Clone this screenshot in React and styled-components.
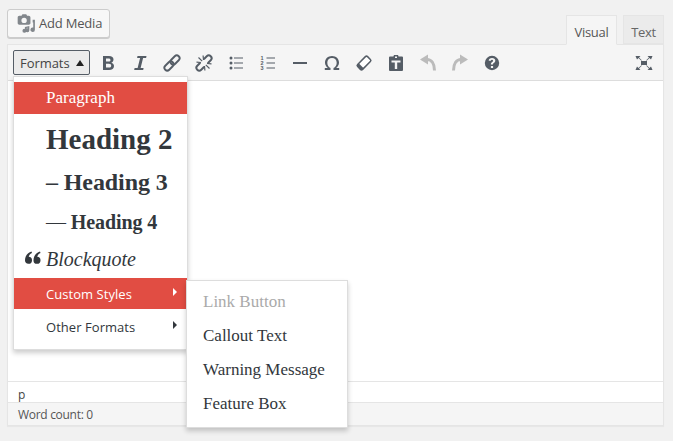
import React from 'react';
import styled, { createGlobalStyle } from 'styled-components';

const GlobalStyle = createGlobalStyle`
  html, body {
    margin: 0;
    padding: 0;
    background: #f1f1f1;
    font-family: "Open Sans", "Liberation Sans", sans-serif;
    color: #444;
  }
  * { box-sizing: border-box; }
`;

const Icons = {
  bold: <path fill="currentColor" d="M4 2h6c2.900 0 4.500 1.400 4.500 3.600 0 1.600-.9 2.700-2.200 3.100 1.700.4 2.700 1.600 2.700 3.400 0 2.500-1.900 3.900-5 3.900H4zm3 2.400v3.200h2.500c1.300 0 2-.6 2-1.600s-.7-1.600-2-1.600zm0 5.400v3.800h2.900c1.500 0 2.300-.7 2.300-1.900s-.8-1.900-2.300-1.900z" />,
  italic: <path fill="currentColor" d="M6.500 2h9l-.4 2h-3L9.600 14h3l-.4 2h-9l.4-2h3L9.100 4h-3z" />,
  link: (
    <g fill="none" stroke="currentColor" strokeWidth="1.900" transform="rotate(-45 9 9)">
      <rect x="-.5" y="6.200" width="10.500" height="5.600" rx="2.800" />
      <rect x="8" y="6.200" width="10.500" height="5.600" rx="2.800" />
    </g>
  ),
  unlink: (
    <g fill="none" stroke="currentColor">
      <g strokeWidth="2" transform="rotate(-45 9 9)">
        <path d="M6.500 6.200H2.300a2.800 2.800 0 0 0 0 5.600h4.200" />
        <path d="M11.500 6.200h4.200a2.800 2.800 0 0 1 0 5.600h-4.200" />
      </g>
      <path strokeWidth="1.200" d="M7.200 7.200 3.500 3.500M8.500 6l-.4-4.500M6 8.500l-4.500-.4M10.800 10.800l3.700 3.700M9.500 12l.4 4.500M12 9.500l4.500.4" />
    </g>
  ),
  bullist: (
    <g fill="currentColor">
      <circle cx="4" cy="4" r="1.500" /><circle cx="4" cy="9" r="1.500" /><circle cx="4" cy="14" r="1.500" />
      <rect x="7" y="3.500" width="9" height="1" /><rect x="7" y="8.500" width="9" height="1" /><rect x="7" y="13.500" width="9" height="1" />
    </g>
  ),
  numlist: (
    <g fill="currentColor">
      <text x="1.500" y="5.800" fontSize="5.500" fontWeight="700" fontFamily="Liberation Sans">1</text>
      <text x="1.500" y="11" fontSize="5.500" fontWeight="700" fontFamily="Liberation Sans">2</text>
      <text x="1.500" y="16" fontSize="5.500" fontWeight="700" fontFamily="Liberation Sans">3</text>
      <rect x="7.500" y="3.500" width="8.500" height="1" /><rect x="7.500" y="8.500" width="8.500" height="1" /><rect x="7.500" y="13.500" width="8.500" height="1" />
    </g>
  ),
  hr: <rect x="2" y="8" width="14" height="2" fill="currentColor" />,
  omega: <path fill="currentColor" d="M1.800 16v-2h3.100C3.200 12.700 2 10.800 2 8.500 2 4.800 5 2 9 2s7 2.800 7 6.500c0 2.300-1.200 4.200-2.900 5.500h3.100v2h-5.700v-2c1.900-.9 3.200-3 3.200-5.300C13.700 6 11.800 4 9 4S4.300 6 4.300 8.700c0 2.300 1.300 4.400 3.200 5.300v2z" />,
  eraser: (
    <g transform="rotate(-45 9 9)">
      <rect x="2" y="5.500" width="14" height="7" rx="1.500" fill="#fff" stroke="currentColor" strokeWidth="1.500" />
      <path fill="currentColor" d="M2 7a1.500 1.500 0 0 1 1.500-1.500H5v7H3.500A1.500 1.500 0 0 1 2 11z" />
    </g>
  ),
  paste: <path fill="currentColor" fillRule="evenodd" d="M7 1h4l.6 1.500H15a1 1 0 0 1 1 1V16a1 1 0 0 1-1 1H3a1 1 0 0 1-1-1V3.500a1 1 0 0 1 1-1h3.400zM8 2.500V4h2V2.500zM4.500 6.500v2h3.300V15h2.400V8.500h3.300v-2z" />,
  undo: (
    <g fill="currentColor">
      <path d="M1 5.500 9 .5v10z" />
      <path fill="none" stroke="currentColor" strokeWidth="3" d="M8 5.500c4.500 0 7.500 4 7.500 11" />
    </g>
  ),
  redo: (
    <g fill="currentColor" transform="matrix(-1 0 0 1 18 0)">
      <path d="M1 5.500 9 .5v10z" />
      <path fill="none" stroke="currentColor" strokeWidth="3" d="M8 5.500c4.500 0 7.500 4 7.500 11" />
    </g>
  ),
  help: <path fill="currentColor" fillRule="evenodd" d="M9 1.800a7.200 7.200 0 1 1 0 14.400A7.200 7.200 0 0 1 9 1.800zM7.900 12v2h2.200v-2zM9 4C7.100 4 5.800 5 5.700 6.800h2.100c.1-.7.500-1 1.200-1s1.100.3 1.100.9c0 .5-.3.800-.9 1.200-.9.600-1.300 1.200-1.300 2.200v.4h2.100v-.3c0-.5.200-.8.800-1.200 1-.6 1.500-1.300 1.500-2.400C12.300 5 11 4 9 4z" />,
  fullscreen: (
    <g fill="currentColor">
      <rect x="6" y="7" width="6" height="4" />
      <path d="M.5 2h5L4 3.500 6.800 6.300l-.5.500L3.500 4 2 5.500zM17.500 2h-5L14 3.500l-2.800 2.800.5.500L14.500 4 16 5.500zM.5 16h5L4 14.500l2.800-2.800-.5-.5-2.800 2.800L2 12.500zM17.500 16h-5l1.500-1.500-2.800-2.800.5-.5 2.800 2.800 1.500-1.500z" />
    </g>
  ),
  media: (
    <g fill="currentColor">
      <path fillRule="evenodd" d="M3 2.500h2l.8-1.300h3.400l.8 1.300h1.500c.8 0 1.500.7 1.500 1.500v5c0 .8-.7 1.500-1.500 1.500H3c-.8 0-1.500-.7-1.500-1.500V4c0-.8.700-1.500 1.500-1.500zM7.300 4.300a2.400 2.400 0 1 0 0 4.800 2.400 2.400 0 0 0 0-4.800z" />
      <path d="M15 6h2v9a2 2 0 1 1-1.500-1.900V8.500L15 8.600zM8 12.500l4-.9v3.900a1.800 1.800 0 1 1-1.400-1.700v-.6l-1.200.3v2.500a1.800 1.800 0 1 1-1.400-1.700z" />
    </g>
  ),
};

const toolbarIcons = [
  { name: 'bold' },
  { name: 'italic' },
  { name: 'link' },
  { name: 'unlink' },
  { name: 'bullist' },
  { name: 'numlist' },
  { name: 'hr' },
  { name: 'omega' },
  { name: 'eraser' },
  { name: 'paste' },
  { name: 'undo', disabled: true },
  { name: 'redo', disabled: true },
  { name: 'help' },
];

const Page = styled.div`
  position: relative;
  width: 673px;
  height: 441px;
  padding: 9px 9px 0 7px;
  overflow: hidden;
`;

const TopRow = styled.div`
  display: flex;
  justify-content: space-between;
  align-items: flex-end;
  height: 35px;
`;

const MediaButton = styled.button`
  display: flex;
  align-items: center;
  gap: 3px;
  align-self: flex-start;
  width: 103px;
  height: 29px;
  padding: 0 0 1px 8px;
  background: #f7f7f7;
  border: 1px solid #ccc;
  border-radius: 3px;
  box-shadow: 0 1px 0 #ccc;
  color: #555;
  font-family: inherit;
  font-size: 13px;
  letter-spacing: -0.2px;
  svg { width: 20px; height: 20px; color: #82878c; }
`;

const Tabs = styled.div`
  display: flex;
  gap: 6px;
`;

const Tab = styled.div`
  height: ${p => (p.$active ? '30px' : '29px')};
  margin-bottom: ${p => (p.$active ? '-1px' : '0')};
  padding: 7px 0 0;
  width: ${p => p.$w}px;
  text-align: center;
  font-size: 13px;
  line-height: 19px;
  letter-spacing: -0.3px;
  color: ${p => (p.$active ? '#555' : '#666')};
  background: ${p => (p.$active ? '#f5f5f5' : '#ebebeb')};
  border: 1px solid #e5e5e5;
  border-bottom-color: ${p => (p.$active ? '#f5f5f5' : '#e5e5e5')};
  position: relative;
`;

const Editor = styled.div`
  width: 657px;
  border: 1px solid #e5e5e5;
  box-shadow: 0 1px 1px rgba(0, 0, 0, 0.04);
`;

const Toolbar = styled.div`
  display: flex;
  align-items: center;
  height: 36px;
  padding: 0 3px 0 5px;
  background: #f5f5f5;
  border-bottom: 1px solid #ddd;
`;

const FormatsButton = styled.div`
  display: flex;
  align-items: center;
  width: 77px;
  height: 25px;
  margin-right: 2px;
  padding-left: 6px;
  background: #ebebeb;
  border: 1px solid #555d66;
  border-radius: 2px;
  color: #444;
  font-size: 13px;
  letter-spacing: -0.05px;
`;

const Caret = styled.span`
  width: 0;
  height: 0;
  margin-left: 6px;
  border-left: 4px solid transparent;
  border-right: 4px solid transparent;
  border-bottom: 6px solid #222;
`;

const IconButton = styled.div`
  display: flex;
  align-items: center;
  justify-content: center;
  width: 32px;
  height: 30px;
  color: ${p => (p.$disabled ? '#bbb' : '#555d66')};
  svg { width: 18px; height: 18px; }
`;

const Spacer = styled.div`
  flex: 1;
`;

const Content = styled.div`
  height: 300px;
  background: #fff;
`;

const PathRow = styled.div`
  height: 21px;
  padding: 4px 10px 0;
  background: #fff;
  border-top: 1px solid #e5e5e5;
  font-size: 12px;
  line-height: 17px;
  color: #444;
`;

const StatusBar = styled.div`
  height: 23px;
  padding: 3px 10px 0;
  background: #f5f5f5;
  border-top: 1px solid #e5e5e5;
  font-size: 12px;
  line-height: 18px;
  letter-spacing: -0.3px;
  color: #555;
`;

const Menu = styled.div`
  position: absolute;
  left: ${p => p.$left}px;
  top: ${p => p.$top}px;
  width: ${p => p.$w}px;
  padding: ${p => p.$pad || '5px 0'};
  background: #fff;
  border: 1px solid #ddd;
  box-shadow: 0 3px 5px rgba(0, 0, 0, 0.2);
`;

const MenuItem = styled.div`
  position: relative;
  display: flex;
  align-items: center;
  height: ${p => p.$h}px;
  padding: ${p => p.$pad || '0'};
  padding-left: 32px;
  background: ${p => (p.$active ? '#e14d43' : 'transparent')};
  color: ${p => (p.$active ? '#fff' : '#32373c')};
`;

const Serif = styled.span`
  font-family: "Liberation Serif", "Times New Roman", serif;
  font-size: ${p => p.$size}px;
  font-weight: ${p => (p.$bold ? 700 : 400)};
  font-style: ${p => (p.$italic ? 'italic' : 'normal')};
  letter-spacing: ${p => p.$track || 0}px;
  color: inherit;
  white-space: nowrap;
`;

const Dash = styled.span`
  font-weight: 400;
`;

const Sans = styled.span`
  font-size: 13px;
  letter-spacing: 0.05px;
  color: inherit;
`;

const Arrow = styled.span`
  position: absolute;
  right: 10px;
  top: 50%;
  margin-top: -6px;
  border-top: 4px solid transparent;
  border-bottom: 4px solid transparent;
  border-left: 4px solid ${p => (p.$active ? '#fff' : '#32373c')};
`;

const QuoteMark = styled.svg`
  position: absolute;
  left: 11px;
  top: 9px;
  width: 16px;
  height: 13px;
  color: #32373c;
`;

const SubItem = styled.div`
  display: flex;
  align-items: center;
  height: 34px;
  padding-left: 16px;
  font-family: "Liberation Serif", "Times New Roman", serif;
  font-size: 17px;
  color: ${p => (p.$muted ? '#aaa' : '#32373c')};
`;

const Icon = ({ name }) => <svg viewBox="0 0 18 18">{Icons[name]}</svg>;

export default function App() {
  return (
    <Page>
      <GlobalStyle />
      <TopRow>
        <MediaButton>
          <svg viewBox="0 0 18 18">{Icons.media}</svg>
          Add Media
        </MediaButton>
        <Tabs>
          <Tab $active $w={51}>Visual</Tab>
          <Tab $w={41}>Text</Tab>
        </Tabs>
      </TopRow>
      <Editor>
        <Toolbar>
          <FormatsButton>
            Formats
            <Caret />
          </FormatsButton>
          {toolbarIcons.map(icon => (
            <IconButton key={icon.name} $disabled={icon.disabled}>
              <Icon name={icon.name} />
            </IconButton>
          ))}
          <Spacer />
          <IconButton>
            <Icon name="fullscreen" />
          </IconButton>
        </Toolbar>
        <Content />
        <PathRow>p</PathRow>
        <StatusBar>Word count: 0</StatusBar>
      </Editor>

      <Menu $left={13} $top={76} $w={175}>
        <MenuItem $active $h={32}><Serif $size={17}>Paragraph</Serif></MenuItem>
        <MenuItem $h={50}><Serif $size={29} $bold>Heading 2</Serif></MenuItem>
        <MenuItem $h={36}><Serif $size={24} $bold $track={-0.1}>– Heading 3</Serif></MenuItem>
        <MenuItem $h={42} $pad="2px 0 0"><Serif $size={20} $bold $track={-0.1}><Dash>—</Dash> Heading 4</Serif></MenuItem>
        <MenuItem $h={36} $pad="0 0 2px">
          <QuoteMark viewBox="0 0 16 13">
            <g fill="currentColor">
              <path d="M6.500.5C2.500 2 0 5 0 9.200a3.500 3.500 0 1 0 3.700-3.400c.3-1.500 1.500-2.800 3.300-3.700z" />
              <path transform="translate(8.500)" d="M6.500.5C2.500 2 0 5 0 9.200a3.500 3.500 0 1 0 3.700-3.400c.3-1.500 1.500-2.800 3.300-3.700z" />
            </g>
          </QuoteMark>
          <Serif $size={20} $italic>Blockquote</Serif>
        </MenuItem>
        <MenuItem $active $h={31}><Sans>Custom Styles</Sans><Arrow $active /></MenuItem>
        <MenuItem $h={35}><Sans>Other Formats</Sans><Arrow /></MenuItem>
      </Menu>

      <Menu $left={186} $top={280} $w={162} $pad="4px 0 6px">
        <SubItem $muted>Link Button</SubItem>
        <SubItem>Callout Text</SubItem>
        <SubItem>Warning Message</SubItem>
        <SubItem>Feature Box</SubItem>
      </Menu>
    </Page>
  );
}
